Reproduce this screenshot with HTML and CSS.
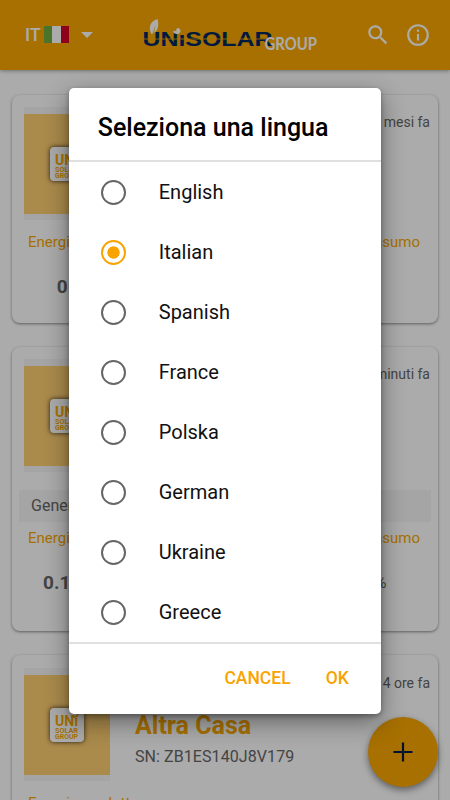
FILE: index.html
```html
<!DOCTYPE html>
<html lang="it">
<head>
<meta charset="utf-8">
<title>Unisolar Group</title>
<link rel="stylesheet" href="styles.css">
</head>
<body>
<svg class="defs" width="0" height="0" aria-hidden="true">
  <symbol id="badge" viewBox="0 0 34 34">
    <rect width="34" height="34" rx="4" fill="#fff"/>
    <g fill="#f9a800" font-family="Roboto, sans-serif" font-weight="700">
      <text x="5" y="18" font-size="14" textLength="23" lengthAdjust="spacingAndGlyphs">UNı</text>
      <text x="5" y="24.500" font-size="7" textLength="23" lengthAdjust="spacingAndGlyphs">SOLAR</text>
      <text x="5" y="31" font-size="7" textLength="23" lengthAdjust="spacingAndGlyphs">GROUP</text>
    </g>
    <path d="M22 7q3 0 3 2q1-3 4-3q-1 3-4 4q-3 0-3-3z" fill="#f9a800"/>
  </symbol>
</svg>
<div class="screen">
  <header class="bar">
    <div class="lang"><span>IT</span><i class="flag"></i><i class="caret"></i></div>
    <svg class="logo" width="178" height="38" viewBox="0 0 178 38">
      <text class="brand" x="1.500" y="30.600" textLength="130" lengthAdjust="spacingAndGlyphs">UNıSOLAR</text>
      <path d="M3 24H130" stroke="#f9a800" stroke-width=".8"/>
      <path d="M10 18.500C7 11 10 6 16.500 4C18.500 11 16.500 16 13 18L14.500 10L11.500 19Z" fill="#fff"/>
      <path d="M32 17Q33 15 35.500 16.500Q34 13 38 13Q41 16 38 18.500Q34 20 32 17Z" fill="#fff"/>
      <text class="group" x="123.500" y="34.700" textLength="52.500" lengthAdjust="spacingAndGlyphs">GROUP</text>
    </svg>
    <svg class="search" width="26" height="26" viewBox="0 0 24 24" fill="#fff"><path d="M15.500 14h-.79l-.28-.27A6.470 6.470 0 0 0 16 9.500 6.500 6.500 0 1 0 9.500 16c1.610 0 3.090-.59 4.230-1.570l.27.28v.79l5 4.990L20.490 19l-4.990-5zm-6 0a4.500 4.500 0 1 1 0-9 4.500 4.500 0 0 1 0 9z"/></svg>
    <svg class="info" width="26" height="26" viewBox="0 0 24 24" fill="#fff"><path d="M11 7h2v2h-2zm0 4h2v6h-2zm1-9a10 10 0 1 0 0 20 10 10 0 0 0 0-20zm0 18a8 8 0 1 1 0-16 8 8 0 0 1 0 16z"/></svg>
  </header>
  <main class="cards">
    <section class="card first">
      <div class="top">
        <div class="thumb"><svg class="badge"><use href="#badge"/></svg></div>
        <div class="detail"><time>2 mesi fa</time></div>
      </div>
      <div class="stats">
        <div><b>Energia prodotta</b><strong>0 kWh</strong></div>
        <div><b>Autoconsumo</b></div>
      </div>
    </section>
    <section class="card second">
      <div class="top">
        <div class="thumb"><svg class="badge"><use href="#badge"/></svg></div>
        <div class="detail"><time>5 minuti fa</time></div>
      </div>
      <p class="strip">Generale</p>
      <div class="stats">
        <div><b>Energia prodotta</b><strong>0.13 kWh</strong></div>
        <div><b>Autoconsumo</b><span>0%</span></div>
      </div>
    </section>
    <section class="card third">
      <div class="top">
        <div class="thumb"><svg class="badge"><use href="#badge"/></svg></div>
        <div class="detail"><time>4 ore fa</time><h2>Altra Casa</h2><p>SN: ZB1ES140J8V179</p></div>
      </div>
      <div class="stats">
        <div><b>Energia prodotta</b></div>
      </div>
    </section>
  </main>
  <button class="fab" aria-label="Aggiungi"><svg width="20" height="20" viewBox="0 0 20 20"><path d="M10 .5V19.500M.5 10H19.500" stroke="#001b4c" stroke-width="2.200"/></svg></button>
  <div class="overlay">
    <div class="dialog">
      <h1>Seleziona una lingua</h1>
      <ul>
        <li><i class="radio"></i>English</li>
        <li><i class="radio on"></i>Italian</li>
        <li><i class="radio"></i>Spanish</li>
        <li><i class="radio"></i>France</li>
        <li><i class="radio"></i>Polska</li>
        <li><i class="radio"></i>German</li>
        <li><i class="radio"></i>Ukraine</li>
        <li><i class="radio"></i>Greece</li>
      </ul>
      <footer><span>CANCEL</span><span>OK</span></footer>
    </div>
  </div>
</div>
</body>
</html>
```
FILE: styles.css
```css
* { box-sizing: border-box; margin: 0; padding: 0; }
body { font-family: Roboto, sans-serif; }
.defs { position: absolute; }
.screen { position: relative; width: 450px; height: 800px; overflow: hidden; background: #fff; }

.bar { display: flex; align-items: flex-start; height: 70px; padding: 0 19px 0 25px; background: #f9a800; box-shadow: 0 1px 4px rgba(0,0,0,.35); }
.lang { display: flex; align-items: center; width: 116px; height: 69px; font-size: 18px; font-weight: 500; color: #fff; }
.flag { width: 25px; height: 17px; margin-left: 3px; background: linear-gradient(90deg, #6fad3f 33%, #fff 33% 67%, #d50027 67%); }
.caret { margin-left: 12px; border: 6px solid transparent; border-top-color: #fff; border-bottom: 0; }
.logo { flex: none; margin-top: 15px; }
.brand { font: 700 19.500px "Liberation Sans", sans-serif; fill: #00285e; }
.group { font: 700 16.500px Lato, sans-serif; fill: #fff; }
.search { margin: 22px 0 0 45.500px; }
.info { margin: 22px 0 0 14px; }

.cards { display: flex; flex-direction: column; gap: 24px; padding: 25px 12px 0; }
.card { flex: none; height: 284px; padding-top: 12px; border-radius: 8px; box-shadow: 0 1px 3px rgba(0,0,0,.45); background: #fff; }
.first { height: 228px; }
.third { padding-top: 13px; }
.top { display: flex; padding: 0 8px 0 12px; }
.thumb { display: flex; justify-content: center; align-items: center; width: 86px; height: 113px; border: solid #f6f6f6; border-width: 7px 0 6px; background: #ffcf72; }
.badge { width: 34px; height: 34px; border-radius: 4px; box-shadow: 0 0 5px rgba(0,0,0,.8); }
.detail { flex: 1; padding-left: 25px; color: #666; }
.detail time { display: block; margin-top: 6px; font-size: 14px; line-height: 18px; text-align: right; }
.detail h2 { margin-top: 19px; font-size: 25px; line-height: 30px; color: #f9a800; }
.detail p { margin-top: 7px; font-size: 16px; line-height: 18px; letter-spacing: .08px; }
.stats { display: flex; justify-content: space-between; padding: 13px 18px 0 16px; }
.stats div { white-space: nowrap; text-align: center; font-size: 15px; line-height: 19px; }
.stats b { display: block; font-weight: 400; color: #f9a800; }
.stats strong, .stats span { display: block; margin-top: 24px; font-size: 19px; line-height: 22px; color: #666; }
.stats span { padding-left: 6px; font-size: 16px; }
.strip { height: 32px; margin: 18px 7px 0; padding-left: 12px; font-size: 16px; line-height: 32px; color: #666; background: #f6f6f6; }
.second .stats { padding-top: 7px; }
.fab { position: absolute; left: 368px; top: 717px; display: flex; align-items: center; justify-content: center; width: 70px; height: 70px; border: 0; border-radius: 50%; background: #f9a800; box-shadow: 0 3px 7px rgba(0,0,0,.45); }

.overlay { position: absolute; inset: 0; display: flex; justify-content: center; padding-top: 87.500px; background: rgba(0,0,0,.33); }
.dialog { width: 312.500px; height: 626.500px; border-radius: 5px; background: #fff; box-shadow: 0 8px 24px rgba(0,0,0,.42), 0 2px 5px rgba(0,0,0,.3); color: #111; }
.dialog h1 { height: 74.500px; padding-left: 29px; border-bottom: 2px solid #e0e0e0; font-size: 25px; font-weight: 500; line-height: 80px; color: #000; }
.dialog ul { list-style: none; }
.dialog li { display: flex; align-items: center; height: 60px; padding-left: 32px; font-size: 20px; }
.radio { display: flex; width: 25px; height: 25px; margin-right: 33px; border: 2.500px solid #666; border-radius: 50%; }
.radio.on { border-color: #f9a300; background: radial-gradient(circle, #f9a300 5.800px, #fff 6.500px); }
.dialog footer { display: flex; justify-content: flex-end; gap: 35px; padding-right: 32.500px; border-top: 2px solid #e0e0e0; font-size: 17.500px; font-weight: 500; line-height: 68px; color: #f9a300; }
```
